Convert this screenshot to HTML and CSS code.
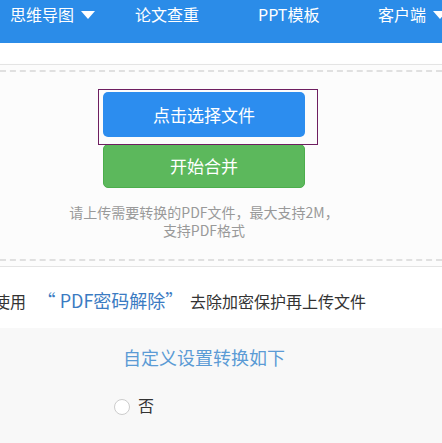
FILE: index.html
```html
<!DOCTYPE html>
<html lang="zh-CN">
<head>
    <meta charset="UTF-8">
    <meta name="viewport" content="width=device-width, initial-scale=1.0">
    <title>PDF合并</title>
    <link rel="stylesheet" href="styles.css">
</head>
<body>
<div class="top-nav">
    <a class="nav-item">思维导图 <i class="arrow"></i></a>
    <a class="nav-item">论文查重</a>
    <a class="nav-item">PPT模板</a>
    <a class="nav-item">客户端 <i class="arrow"></i></a>
</div>

<div class="upload">
    <div class="drop">
        <div class="inner">
            <div class="pick">
                <span class="btn btn-blue">点击选择文件</span>
            </div>
            <span class="btn btn-green">开始合并</span>
            <p class="hint">请上传需要转换的PDF文件，最大支持2M，<br>支持PDF格式</p>
        </div>
    </div>
</div>

<div class="tip">
    <span class="tip-text first">使用</span>
    <a class="tip-link">“ PDF密码解除”</a>
    <span class="tip-text">去除加密保护再上传文件</span>
</div>

<div class="setting">
    <div class="inner">
        <div class="setting-title">自定义设置转换如下</div>
        <div class="radio-row">
            <label class="radio"><span class="circle"></span>否</label>
        </div>
    </div>
</div>
</body>
</html>
```

FILE: styles.css
```css
*{
    margin: 0;
    padding: 0;
    box-sizing: border-box;
}

body{
    font-family: "Noto Sans CJK SC", "Microsoft YaHei", sans-serif;
    background-color: #fff;
    overflow: hidden;
}

.top-nav{
    height: 43px;
    background-color: #2b8ce8;
    display: grid;
    grid-template-columns: 125px 123px 120px auto;
    padding-left: 10px;
    white-space: nowrap;
}

.nav-item{
    color: #fff;
    font-size: 16px;
    line-height: 28px;
}

.arrow{
    display: inline-block;
    width: 0;
    height: 0;
    border-left: 7px solid transparent;
    border-right: 7px solid transparent;
    border-top: 8px solid #fff;
    margin-left: 3px;
    vertical-align: 2px;
}

.upload{
    margin-top: 21px;
    border-top: 1px solid #e4e4e4;
    border-bottom: 1px solid #e4e4e4;
    background-color: #fcfcfc;
    padding: 5px 0 5px;
    box-shadow: 0 2px 4px rgba(0,0,0,0.06);
}

.drop{
    border-top: 2px dashed #e0e0e0;
    border-bottom: 2px dashed #e0e0e0;
    padding: 20px 0 20px;
}

.inner{
    width: 408px;
    text-align: center;
}

.pick{
    position: relative;
    width: 202px;
    margin: 0 auto;
}

.pick::after{
    content: "";
    position: absolute;
    left: -5px;
    top: -3px;
    right: -13px;
    bottom: -8px;
    border: 1px solid #6e1e60;
}

.btn{
    display: block;
    width: 202px;
    margin: 0 auto;
    color: #fff;
    font-size: 17px;
    border-radius: 5px;
}

.btn-blue{
    height: 45px;
    line-height: 45px;
    background-color: #2c8def;
}

.btn-green{
    margin-top: 7px;
    height: 44px;
    line-height: 42px;
    background-color: #5cb85c;
    border: 1px solid #4cae4c;
}

.hint{
    margin-top: 15px;
    font-size: 14px;
    line-height: 18px;
    color: #999;
}

.tip{
    padding: 22px 0 16px;
    line-height: 22px;
    white-space: nowrap;
    background-color: #fff;
}

.tip-text{
    font-size: 16px;
    color: #333;
}

.first{
    margin-left: -6px;
}

.tip-link{
    font-size: 18px;
    color: #3b7bc2;
    margin: 0 3px 0 8px;
}

.setting{
    background-color: #f8f8f8;
    height: 200px;
    padding-top: 17px;
}

.setting-title{
    font-size: 18px;
    line-height: 24px;
    color: #5b9bd5;
}

.radio-row{
    margin-top: 24px;
    padding-left: 114px;
    text-align: left;
}

.radio{
    font-size: 16px;
    line-height: 24px;
    color: #333;
}

.circle{
    display: inline-block;
    width: 16px;
    height: 16px;
    border: 1px solid #ccc;
    border-radius: 50%;
    background-color: #fff;
    vertical-align: -3px;
    margin-right: 8px;
}
```
